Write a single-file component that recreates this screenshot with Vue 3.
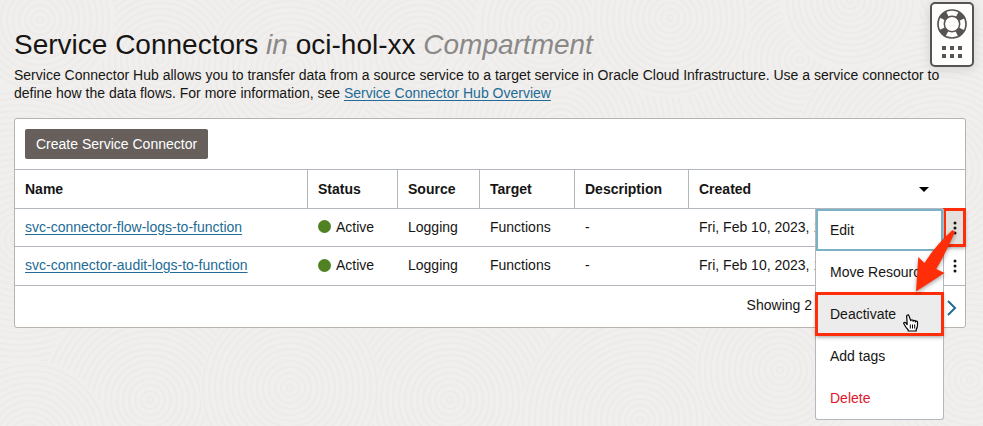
<script setup>
import { ref } from 'vue'

const columns = ['Name', 'Status', 'Source', 'Target', 'Description']

const rows = [
  { name: 'svc-connector-flow-logs-to-function', created: 'Fri, Feb 10, 2023, 1' },
  { name: 'svc-connector-audit-logs-to-function', created: 'Fri, Feb 10, 2023, 1' }
]

const openRow = ref(0)

const actions = [
  { label: 'Edit', kind: 'focused' },
  { label: 'Move Resource', kind: '' },
  { label: 'Deactivate', kind: 'marked' },
  { label: 'Add tags', kind: '' },
  { label: 'Delete', kind: 'danger' }
]

// Groups of concentric rings; later groups cover earlier ones.
const ripples = [
  [160, 60, 130], [420, 50, 150], [800, 60, 160], [940, 170, 150],
  [560, 130, 130], [20, 240, 150], [40, 20, 75], [290, 70, 85],
  [545, 25, 70], [670, 18, 80], [850, 0, 70], [150, 400, 110],
  [450, 400, 120], [640, 420, 120], [780, 370, 85], [290, 388, 90],
  [970, 380, 90], [30, 440, 80]
].map(([x, y, size]) => ({
  x, y, size,
  rings: Array.from({ length: Math.floor(size / 6) }, (_, i) => 3 + i * 6)
}))
</script>

<template>
  <div class="page">
    <svg class="backdrop" viewBox="0 0 983 426" preserveAspectRatio="xMidYMid slice" aria-hidden="true">
      <g v-for="(r, i) in ripples" :key="i">
        <circle class="base" :cx="r.x" :cy="r.y" :r="r.size" />
        <circle v-for="n in r.rings" :key="n" class="ring" :cx="r.x" :cy="r.y" :r="n" />
      </g>
    </svg>

    <button class="help" type="button" aria-label="Help">
      <svg width="30" height="30" viewBox="0 0 30 30">
        <circle cx="15" cy="15" r="11" fill="none" stroke="#575350" stroke-width="7" stroke-dasharray="7 10.28" stroke-dashoffset="-5.14" />
        <circle cx="15" cy="15" r="14" fill="none" stroke="#575350" stroke-width="1.7" />
        <circle cx="15" cy="15" r="7.7" fill="#fdfdfc" stroke="#575350" stroke-width="1.5" />
      </svg>
      <svg width="20" height="12" viewBox="0 0 20 12" fill="#575350">
        <path d="M0 0h4v4H0zM8 0h4v4H8zM16 0h4v4h-4zM0 8h4v4H0zM8 8h4v4H8zM16 8h4v4h-4z" />
      </svg>
    </button>

    <main class="content">
      <h1>Service Connectors <em>in</em> oci-hol-xx <em>Compartment</em></h1>
      <p class="intro">
        Service Connector Hub allows you to transfer data from a source service to a target service in
        Oracle Cloud Infrastructure. Use a service connector to define how the data flows. For more
        information, see <a href="#">Service Connector Hub Overview</a>
      </p>

      <section class="panel">
        <div class="toolbar">
          <button class="create" type="button">Create Service Connector</button>
        </div>

        <table>
          <colgroup>
            <col class="c-name" /><col class="c-status" /><col class="c-source" />
            <col class="c-target" /><col class="c-desc" /><col /><col class="c-menu" />
          </colgroup>
          <thead>
            <tr>
              <th v-for="c in columns" :key="c" scope="col">{{ c }}</th>
              <th scope="col">
                <div class="sortable">
                  Created
                  <svg width="10" height="5" viewBox="0 0 10 5"><path d="M0 0h10L5 5z" fill="#000" /></svg>
                </div>
              </th>
              <th></th>
            </tr>
          </thead>
          <tbody>
            <tr v-for="(row, i) in rows" :key="row.name">
              <td><a href="#">{{ row.name }}</a></td>
              <td><span class="status"><i class="dot"></i>Active</span></td>
              <td>Logging</td>
              <td>Functions</td>
              <td>-</td>
              <td class="created">{{ row.created }}</td>
              <td class="menu-cell">
                <button class="kebab" :class="{ open: openRow === i }" type="button" aria-label="Actions">
                  <svg width="4" height="14" viewBox="0 0 4 14" fill="#161513">
                    <circle cx="2" cy="2" r="1.5" /><circle cx="2" cy="7" r="1.5" /><circle cx="2" cy="12" r="1.5" />
                  </svg>
                </button>
                <div v-if="openRow === i" class="menu" role="menu">
                  <button v-for="a in actions" :key="a.label" type="button" role="menuitem" :class="a.kind">
                    {{ a.label }}
                  </button>
                  <svg class="pointer" width="16" height="18" viewBox="0 0 16 18">
                    <path d="M4.2 10.5 2.8 8.8C1.7 7.6 0.2 8.7 1 10l2 3.3 2.2 2.6V17h8v-1.6c1-1.5 1.3-2.8 1.3-4.2V8.3c0-1.4-1.9-1.5-2.1-.4V7.3c0-1.3-2.2-1.3-2.3 0V6.7c0-1.3-2.2-1.3-2.3 0L6 1.9C5.6.4 3.4.9 3.7 2.5z" fill="#fff" stroke="#000" stroke-width="1.2" stroke-linejoin="round" />
                    <path d="M7.3 10.5v4M9.5 10.5v4M11.7 10.5v4" stroke="#000" stroke-width="1" fill="none" />
                  </svg>
                  <svg class="arrow" width="40" height="70" viewBox="0 0 40 70">
                    <path d="M38.5 8C29 17 20 26 10.5 41L4.300 35 2 69.500 30.500 51 22.300 47C29 36 35 23 41 10z" fill="#ff2d08" />
                  </svg>
                </div>
              </td>
            </tr>
          </tbody>
        </table>

        <footer>
          <span class="count">Showing 2</span>
          <button class="next" type="button" aria-label="Next page">
            <svg width="10" height="16" viewBox="0 0 10 16"><path d="M1 1l7 7-7 7" fill="none" stroke="#226b95" stroke-width="2" /></svg>
          </button>
        </footer>
      </section>
    </main>
  </div>
</template>

<style>
body {
  background: #f1efed;
}
</style>

<style scoped>
.page {
  position: relative;
  min-height: 100vh;
  overflow: hidden;
  font: 14px/18px "Liberation Sans", Arial, sans-serif;
  color: #161513;
}
.page * {
  box-sizing: border-box;
}
svg {
  display: block;
}
button {
  margin: 0;
  padding: 0;
  border: 0;
  background: none;
  font: inherit;
  color: inherit;
}
a {
  color: #226b95;
  text-underline-offset: 2px;
}
.backdrop {
  position: absolute;
  inset: 0;
  width: 100%;
  height: 100%;
}
.base {
  fill: #f1efed;
}
.ring {
  fill: none;
  stroke: #edebe9;
  stroke-width: 2;
}
.help {
  position: absolute;
  top: 2px;
  right: 9px;
  z-index: 3;
  display: flex;
  flex-direction: column;
  align-items: center;
  gap: 7px;
  padding: 5px 5px 7px;
  border: 2px solid #575350;
  border-radius: 5px;
  background: #fdfdfc;
  box-shadow: 0 2px 12px rgba(0, 0, 0, 0.12);
}
.content {
  position: relative;
  padding: 28px 17px 0 14px;
}
h1 {
  margin: 0 0 4px;
  font-size: 28px;
  line-height: 34px;
  font-weight: 400;
}
h1 em {
  color: #8b8987;
}
.intro {
  margin: 0 0 16px;
}
.panel {
  border: 1px solid #b9b3ad;
  border-radius: 3px;
  background: #fff;
}
.toolbar {
  padding: 10px;
}
.create {
  display: block;
  height: 30px;
  padding: 0 11px;
  border-radius: 2px;
  background: #665f5b;
  color: #fff;
}
table {
  width: 100%;
  table-layout: fixed;
  border-collapse: separate;
  border-spacing: 0;
}
.c-name { width: 293px; }
.c-status { width: 90px; }
.c-source { width: 82px; }
.c-target { width: 95px; }
.c-desc { width: 114px; }
.c-menu { width: 21px; }
th,
td {
  height: 38px;
  padding: 0 10px;
  border-bottom: 1px solid #b3b8be;
  text-align: left;
}
td {
  padding-bottom: 2px;
}
th {
  height: 40px;
  border-top: 1px solid #b3b8be;
}
tbody tr:last-child td {
  height: 39px;
}
th:nth-child(-n + 5) {
  border-right: 1px solid #b3b8be;
}
.sortable {
  display: flex;
  align-items: center;
  justify-content: space-between;
  padding-right: 5px;
}
.status {
  display: flex;
  align-items: center;
  gap: 5px;
}
.dot {
  width: 13px;
  height: 13px;
  border-radius: 50%;
  background: #508223;
}
.created {
  white-space: nowrap;
}
.menu-cell {
  position: relative;
  padding: 0;
}
.kebab {
  display: grid;
  place-items: center;
  width: 100%;
  height: 37px;
}
.kebab.open {
  background: #e4e0dc;
  outline: 3px solid #ff2d08;
  outline-offset: -2px;
  box-shadow: 0 2px 4px rgba(0, 0, 0, 0.4);
}
.menu {
  position: absolute;
  top: 0;
  right: 100%;
  z-index: 2;
  width: 129px;
  border: 1px solid #b3b8be;
  border-top: 0;
  border-radius: 0 0 3px 3px;
  background: #fff;
}
.menu button {
  display: block;
  width: 100%;
  height: 42px;
  padding-left: 14px;
  text-align: left;
}
.menu .focused {
  padding-left: 12px;
  border: 2px solid #7bb1c7;
}
.menu .marked {
  position: relative;
  background: #ececec;
  outline: 3px solid #ff2d08;
  outline-offset: -2px;
  box-shadow: 0 2px 4px rgba(0, 0, 0, 0.4);
}
.menu .danger {
  color: #e0162b;
}
.pointer {
  position: absolute;
  top: 105px;
  left: 87px;
}
.arrow {
  position: absolute;
  top: 13px;
  left: 98px;
  overflow: visible;
  filter: drop-shadow(0 2px 2px rgba(0, 0, 0, 0.35));
}
footer {
  display: flex;
  justify-content: flex-end;
  align-items: flex-start;
  gap: 135px;
  height: 41px;
  padding: 10px 8px 0 0;
}
.next {
  padding-top: 4px;
}
</style>
